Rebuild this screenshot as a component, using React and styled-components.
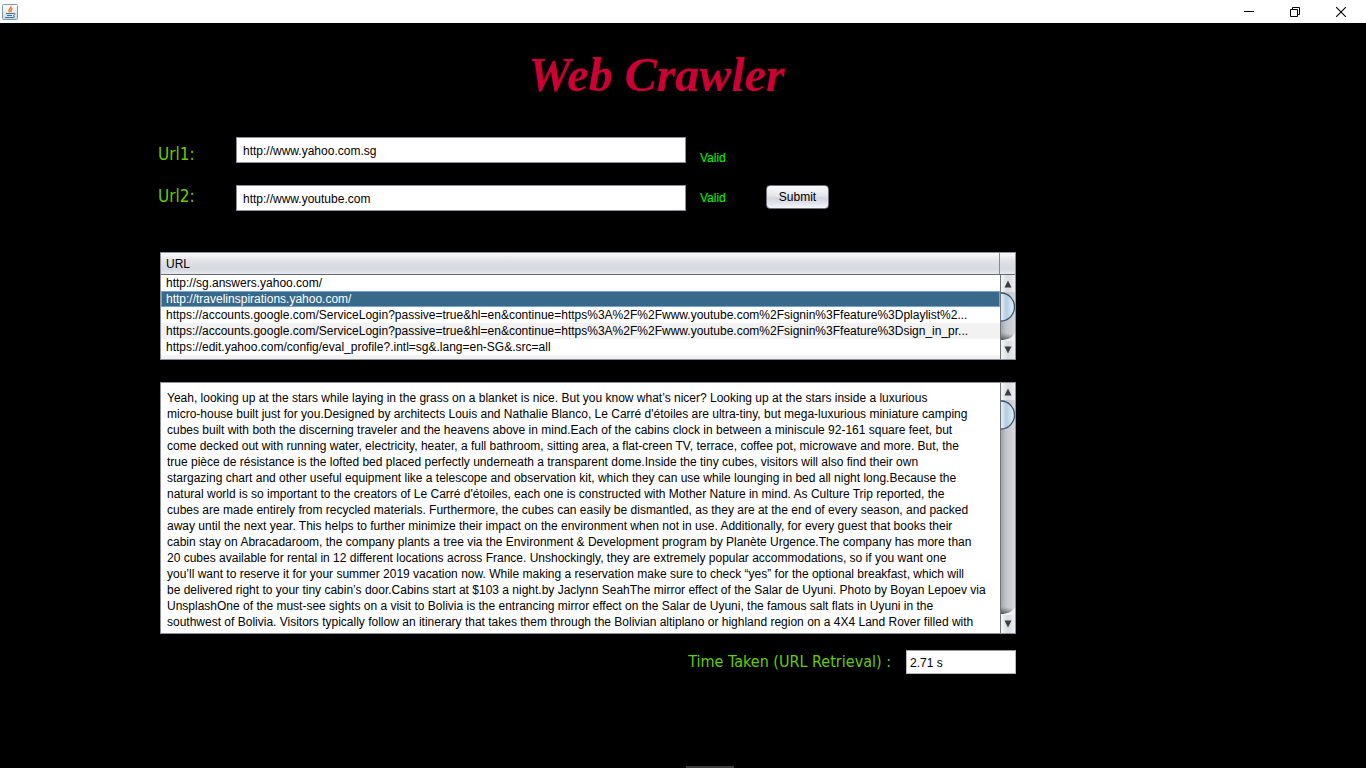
import React from "react";
import styled, { createGlobalStyle } from "styled-components";

const GlobalStyle = createGlobalStyle`
  * { box-sizing: border-box; }
  body {
    margin: 0;
    background: #000;
    font-family: "Liberation Sans", Arial, sans-serif;
    font-size: 12px;
    color: #000;
  }
`;

const Window = styled.div`
  display: flex;
  flex-direction: column;
  min-height: 100vh;
  background: #000;
`;

const TitleBar = styled.header`
  display: flex;
  align-items: center;
  justify-content: space-between;
  height: 23px;
  padding: 0 2px;
  background: #fff;
`;

const WindowControls = styled.div`
  display: flex;
`;

const ControlButton = styled.button`
  display: flex;
  align-items: center;
  justify-content: center;
  width: 46px;
  height: 20px;
  padding: 0;
  border: 0;
  background: transparent;
`;

const Main = styled.main`
  flex: 1;
  padding: 24px 350px 0 156px;
`;

const Title = styled.h1`
  margin: 0 0 34px 372px;
  font: italic bold 48px/56px "Liberation Serif", "Times New Roman", serif;
  color: #cc0033;
  white-space: nowrap;
`;

const Form = styled.form`
  display: flex;
  align-items: flex-start;
`;

const Labels = styled.div`
  display: flex;
  flex-direction: column;
  gap: 18px;
  width: 80px;
  padding: 5px 0 0 2px;
`;

const Label = styled.label`
  font: 17px/24px "DejaVu Sans Condensed", Tahoma, sans-serif;
  color: #66cc00;
  white-space: nowrap;
`;

const Fields = styled.div`
  display: flex;
  flex-direction: column;
  flex: 0 1 450px;
  gap: 22px;
`;

const UrlInput = styled.input`
  width: 100%;
  height: 26px;
  padding: 2px 6px 0;
  border: 1px solid #8d909c;
  background: #fff;
  color: #000;
  font: inherit;
  outline: 0;
`;

const Statuses = styled.div`
  display: flex;
  flex-direction: column;
  gap: 22px;
  width: 80px;
  padding: 12px 0 0 14px;
`;

const Status = styled.output`
  line-height: 18px;
  color: #00ff00;
`;

const SubmitButton = styled.button`
  width: 63px;
  height: 24px;
  margin-top: 48px;
  padding: 0;
  border: 1px solid #6d717c;
  border-radius: 4px;
  background: linear-gradient(#fbfbfc, #e3e5ea 45%, #d3d6dd 55%, #e2e5eb 80%, #f4f7fd);
  color: #000;
  font: inherit;
`;

const Results = styled.section`
  display: flex;
  flex-direction: column;
  gap: 22px;
  padding: 41px 0 0 4px;
`;

const Pane = styled.div`
  display: grid;
  grid-template-columns: minmax(0, 1fr) 15px;
  border: 1px solid #8d909c;
  background: #fff;
`;

const TableArea = styled.div`
  padding-bottom: 4px;
  background: #f2f2f2;
`;

const UrlTable = styled.table`
  width: 100%;
  border-collapse: separate;
  border-spacing: 0;
  table-layout: fixed;
`;

const headerFill = `linear-gradient(#fafafb, #e3e4e9 35%, #d6d8df 75%, #e6e9ef)`;

const HeadCell = styled.th`
  height: 22px;
  padding: 0 5px;
  border-right: 1px solid #868a94;
  border-bottom: 1px solid #686c75;
  background: ${headerFill};
  font-weight: normal;
  line-height: 16px;
  text-align: left;
`;

const Row = styled.tr`
  background: ${(p) => (p.$selected ? "#39698a" : p.$striped ? "#f2f2f2" : "#fff")};
  color: ${(p) => (p.$selected ? "#fff" : "#000")};
  outline: ${(p) => (p.$selected ? "1px solid #73a4d1" : "0")};
  outline-offset: -1px;
`;

const UrlCell = styled.td`
  height: 16px;
  padding: 0 5px;
  line-height: 16px;
  white-space: nowrap;
`;

const Side = styled.div`
  display: flex;
  flex-direction: column;
`;

const Corner = styled.div`
  height: 22px;
  border-bottom: 1px solid #686c75;
  background: ${headerFill};
`;

const ScrollBar = styled.div`
  display: flex;
  flex: 1;
  flex-direction: column;
  border-left: 1px solid #6e727b;
  background: linear-gradient(90deg, #a4a6ad, #c3c5cb 35%, #d6d8de);
`;

const Arrow = styled.button`
  display: flex;
  align-items: center;
  justify-content: center;
  height: ${(p) => (p.$down ? 18 : 17)}px;
  padding: 0;
  border: 0;
  background: linear-gradient(90deg, #f4f5f7, #d9dbe1 50%, #eceef2);
`;

const Track = styled.div`
  flex: 1;
  overflow: hidden;
`;

const Story = styled.textarea`
  display: block;
  width: 100%;
  height: 250px;
  padding: 7px 0 0 6px;
  border: 0;
  outline: 0;
  resize: none;
  overflow: hidden;
  background: #fff;
  color: #000;
  font: 12px/16px "Liberation Sans", Arial, sans-serif;
  white-space: pre;
`;

const TimeRow = styled.div`
  display: flex;
  align-items: flex-start;
  justify-content: flex-end;
  gap: 15px;
  padding-top: 16px;
`;

const TimeLabel = styled(Label)`
  font-size: 16px;
`;

const TimeInput = styled(UrlInput)`
  width: 110px;
  height: 24px;
  padding: 2px 3px 0;
  border-color: #9b9b9b #b9b9b9 #b9b9b9;
`;

const Footer = styled.footer`
  display: flex;
  justify-content: center;
  padding-left: 54px;
`;

const Handle = styled.div`
  width: 48px;
  height: 2px;
  background: #3c3c3c;
`;

const urls = [
  "http://sg.answers.yahoo.com/",
  "http://travelinspirations.yahoo.com/",
  "https://accounts.google.com/ServiceLogin?passive=true&hl=en&continue=https%3A%2F%2Fwww.youtube.com%2Fsignin%3Ffeature%3Dplaylist%2...",
  "https://accounts.google.com/ServiceLogin?passive=true&hl=en&continue=https%3A%2F%2Fwww.youtube.com%2Fsignin%3Ffeature%3Dsign_in_pr...",
  "https://edit.yahoo.com/config/eval_profile?.intl=sg&.lang=en-SG&.src=all",
];

const story = [
  "Yeah, looking up at the stars while laying in the grass on a blanket is nice. But you know what’s nicer? Looking up at the stars inside a luxurious",
  "micro-house built just for you.Designed by architects Louis and Nathalie Blanco, Le Carré d'étoiles are ultra-tiny, but mega-luxurious miniature camping",
  "cubes built with both the discerning traveler and the heavens above in mind.Each of the cabins clock in between a miniscule 92-161 square feet, but",
  "come decked out with running water, electricity, heater, a full bathroom, sitting area, a flat-creen TV, terrace, coffee pot, microwave and more. But, the",
  "true pièce de résistance is the lofted bed placed perfectly underneath a transparent dome.Inside the tiny cubes, visitors will also find their own",
  "stargazing chart and other useful equipment like a telescope and observation kit, which they can use while lounging in bed all night long.Because the",
  "natural world is so important to the creators of Le Carré d'étoiles, each one is constructed with Mother Nature in mind. As Culture Trip reported, the",
  "cubes are made entirely from recycled materials. Furthermore, the cubes can easily be dismantled, as they are at the end of every season, and packed",
  "away until the next year. This helps to further minimize their impact on the environment when not in use. Additionally, for every guest that books their",
  "cabin stay on Abracadaroom, the company plants a tree via the Environment & Development program by Planète Urgence.The company has more than",
  "20 cubes available for rental in 12 different locations across France. Unshockingly, they are extremely popular accommodations, so if you want one",
  "you’ll want to reserve it for your summer 2019 vacation now. While making a reservation make sure to check “yes” for the optional breakfast, which will",
  "be delivered right to your tiny cabin’s door.Cabins start at $103 a night.by Jaclynn SeahThe mirror effect of the Salar de Uyuni. Photo by Boyan Lepoev via",
  "UnsplashOne of the must-see sights on a visit to Bolivia is the entrancing mirror effect on the Salar de Uyuni, the famous salt flats in Uyuni in the",
  "southwest of Bolivia. Visitors typically follow an itinerary that takes them through the Bolivian altiplano or highland region on a 4X4 Land Rover filled with",
].join("\n");

function JavaIcon() {
  return (
    <svg width="16" height="16" viewBox="0 0 16 16" aria-hidden="true">
      <defs>
        <linearGradient id="tile" x1="0" y1="0" x2="0" y2="1">
          <stop offset="0" stopColor="#fff" />
          <stop offset="1" stopColor="#c9d7e2" />
        </linearGradient>
      </defs>
      <rect x=".5" y=".5" width="15" height="15" rx="1" fill="url(#tile)" stroke="#7d98ac" />
      <path d="M9 2c1 2-3 3-2 5l1 1M10.500 4.500c-2 1-2 2-1 3.500" fill="none" stroke="#ee7a24" strokeWidth="1.400" />
      <path d="M4 9.500h7M5 11.500h5M3 13.500h8l2-1M11 9.500c3-1 2 2 0 2" fill="none" stroke="#3f718f" />
    </svg>
  );
}

function MinimizeIcon() {
  return (
    <svg width="10" height="10" viewBox="0 0 10 10" aria-hidden="true">
      <path d="M0 4.500h10" stroke="#000" />
    </svg>
  );
}

function RestoreIcon() {
  return (
    <svg width="10" height="10" viewBox="0 0 10 10" fill="none" stroke="#000" aria-hidden="true">
      <path d="M.5 2.500h7v7h-7zM2.500 2.500v-2h7v7h-2" />
    </svg>
  );
}

function CloseIcon() {
  return (
    <svg width="10" height="10" viewBox="0 0 10 10" aria-hidden="true">
      <path d="M0 0l10 10M10 0L0 10" stroke="#000" strokeWidth="1.100" />
    </svg>
  );
}

function Thumb({ id }) {
  return (
    <svg width="14" height="30" viewBox="0 0 14 30" display="block" aria-hidden="true">
      <defs>
        <linearGradient id={id} x1="0" y1="0" x2="1" y2="0">
          <stop offset="0" stopColor="#e4eff7" />
          <stop offset=".4" stopColor="#b4cde0" />
          <stop offset="1" stopColor="#e6f4fd" />
        </linearGradient>
      </defs>
      <path d="M0 1C8 1 13.500 8 13.500 15S8 29 0 29z" fill={`url(#${id})`} />
      <path d="M0 1C8 1 13.500 8 13.500 15S8 29 0 29" fill="none" stroke="#3c5870" strokeWidth="1.400" />
    </svg>
  );
}

function ArrowIcon({ down }) {
  return (
    <svg width="8" height="8" viewBox="0 0 8 8" aria-hidden="true">
      <path d={down ? "M.5.500h7L4 7.500z" : "M.5 7.500h7L4 .5z"} fill="#3b3d42" />
    </svg>
  );
}

function TrackEnd({ id }) {
  return (
    <svg width="14" height="8" viewBox="0 0 14 8" display="block" aria-hidden="true">
      <defs>
        <linearGradient id={id} x1=".3" y1="0" x2="0" y2="1">
          <stop offset="0" stopColor="#55585f" stopOpacity="0" />
          <stop offset="1" stopColor="#3f4248" />
        </linearGradient>
      </defs>
      <rect width="14" height="8" fill={`url(#${id})`} />
      <path d="M0 7C6 7 11 5 14 0v8H0z" fill="#eef0f3" />
    </svg>
  );
}

function VerticalScroll({ id }) {
  return (
    <ScrollBar>
      <Arrow type="button" aria-label="Scroll up"><ArrowIcon /></Arrow>
      <Track><Thumb id={`${id}-thumb`} /></Track>
      <TrackEnd id={`${id}-end`} />
      <Arrow type="button" aria-label="Scroll down" $down><ArrowIcon down /></Arrow>
    </ScrollBar>
  );
}

export default function App() {
  return (
    <Window>
      <GlobalStyle />
      <TitleBar>
        <JavaIcon />
        <WindowControls>
          <ControlButton type="button" aria-label="Minimize"><MinimizeIcon /></ControlButton>
          <ControlButton type="button" aria-label="Restore"><RestoreIcon /></ControlButton>
          <ControlButton type="button" aria-label="Close"><CloseIcon /></ControlButton>
        </WindowControls>
      </TitleBar>
      <Main>
        <Title>Web Crawler</Title>
        <Form onSubmit={(e) => e.preventDefault()}>
          <Labels>
            <Label htmlFor="url1">Url1:</Label>
            <Label htmlFor="url2">Url2:</Label>
          </Labels>
          <Fields>
            <UrlInput id="url1" defaultValue="http://www.yahoo.com.sg" />
            <UrlInput id="url2" defaultValue="http://www.youtube.com" />
          </Fields>
          <Statuses>
            <Status htmlFor="url1">Valid</Status>
            <Status htmlFor="url2">Valid</Status>
          </Statuses>
          <SubmitButton type="submit">Submit</SubmitButton>
        </Form>
        <Results>
          <Pane>
            <TableArea>
              <UrlTable>
                <thead>
                  <tr><HeadCell scope="col">URL</HeadCell></tr>
                </thead>
                <tbody>
                  {urls.map((url, i) => (
                    <Row key={url} $selected={i === 1} $striped={i % 2 === 1}>
                      <UrlCell>{url}</UrlCell>
                    </Row>
                  ))}
                </tbody>
              </UrlTable>
            </TableArea>
            <Side>
              <Corner />
              <VerticalScroll id="table" />
            </Side>
          </Pane>
          <Pane>
            <Story aria-label="Page text" defaultValue={story} />
            <Side>
              <VerticalScroll id="story" />
            </Side>
          </Pane>
        </Results>
        <TimeRow>
          <TimeLabel htmlFor="time">Time Taken (URL Retrieval) :</TimeLabel>
          <TimeInput id="time" readOnly defaultValue="2.71 s" />
        </TimeRow>
      </Main>
      <Footer><Handle /></Footer>
    </Window>
  );
}
